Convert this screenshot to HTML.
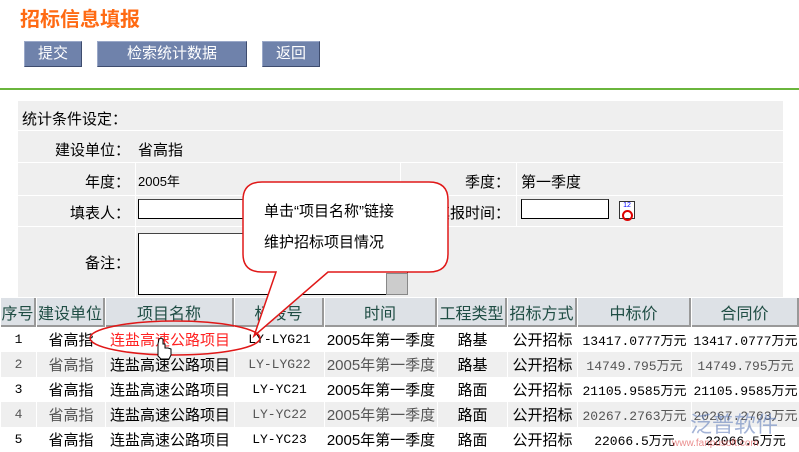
<!DOCTYPE html>
<html><head><meta charset="utf-8"><style>
body{margin:0;width:799px;height:449px;overflow:hidden;background:#fff;font-family:"Liberation Sans","Noto Sans CJK SC",sans-serif;position:relative;font-size:14px;color:#000}
.a{position:absolute}
.title{left:20px;top:3px;font-size:20px;font-weight:bold;color:#ff6a13}
.btn{top:41px;height:24px;background:#6f82ab;border:1px solid #9aa8c8;border-right-color:#3e4c6e;border-bottom-color:#3e4c6e;color:#fff;font-size:15px;text-align:center;line-height:24px}
.green{left:0;top:88px;width:799px;height:2px;background:#6ab53c}
.panel{left:18px;top:101px;width:765px;height:196px;background:#efefef}
.r{position:absolute;left:0;width:765px;border-top:1px solid #fff}
.lbl{position:absolute;text-align:right;font-size:15px}
input.f{position:absolute;height:20px;border:1px solid #000;border-top-color:#444;background:#fff;box-sizing:border-box}
table{position:absolute;left:0;top:298px;border-collapse:separate;border-spacing:1px 0;width:800px;font-size:15px}
th{background:#dde1e6;color:#1f4d44;font-weight:normal;height:27px;border-right:2px solid #999;border-bottom:2px solid #999;padding:0;font-size:16px}
td{height:25px;text-align:center;padding:0;white-space:nowrap}
tr.g td{background:#efefef;color:#555}
.mono{font-family:"Liberation Mono","Noto Sans CJK SC",monospace;font-size:13px}
</style></head><body>
<div class="a title">招标信息填报</div>
<div class="a btn" style="left:24px;width:56px">提交</div>
<div class="a btn" style="left:97px;width:148px">检索统计数据</div>
<div class="a btn" style="left:262px;width:56px">返回</div>
<div class="a green"></div>
<div class="a panel">
 <div class="lbl" style="left:4px;top:7px;text-align:left">统计条件设定：</div>
 <div class="r" style="top:29px;height:32px"></div>
 <div class="lbl" style="left:0;width:112px;top:38px">建设单位：</div>
 <div class="lbl" style="left:120px;top:38px;text-align:left">省高指</div>
 <div class="r" style="top:61px;height:33px"></div>
 <div style="position:absolute;left:117px;top:62px;width:1px;height:134px;background:#fff"></div>
 <div class="lbl" style="left:0;width:112px;top:70px">年度：</div>
 <div class="lbl" style="left:120px;top:70px;text-align:left;font-size:13px">2005年</div>
 <div style="position:absolute;left:382px;top:62px;width:1px;height:64px;background:#fff"></div>
 <div style="position:absolute;left:498px;top:62px;width:1px;height:64px;background:#fff"></div>
 <div class="lbl" style="left:400px;width:92px;top:70px">季度：</div>
 <div class="lbl" style="left:503px;top:70px;text-align:left">第一季度</div>
 <div class="r" style="top:94px"></div>
 <div class="lbl" style="left:0;width:112px;top:101px">填表人：</div>
 <input class="f" style="left:120px;top:98px;width:120px">
 <div class="lbl" style="left:380px;width:112px;top:101px">填报时间：</div>
 <input class="f" style="left:503px;top:98px;width:88px">
 <div style="position:absolute;left:601px;top:100px;width:14px;height:16px;border:1px solid #333;background:#fff;font-size:7px;color:#00f;line-height:8px;text-align:center">12<div style="width:7px;height:7px;border:2px solid #d00;border-radius:50%;margin:0 auto"></div></div>
 <div class="r" style="top:125px"></div>
 <div class="lbl" style="left:0;width:112px;top:151px">备注：</div>
 <input class="f" style="left:120px;top:132px;width:270px;height:62px">
 <div style="position:absolute;left:368px;top:172px;width:20px;height:20px;background:#ccc;border:1px solid #888"></div>
</div>
<table>
<tr><th style="width:33px">序号</th><th style="width:66px">建设单位</th><th style="width:126px">项目名称</th><th style="width:87px">标段号</th><th style="width:110px">时间</th><th style="width:67px">工程类型</th><th style="width:67px">招标方式</th><th style="width:111px">中标价</th><th>合同价</th></tr>
<tr><td class="mono">1</td><td>省高指</td><td style="color:#f22">连盐高速公路项目</td><td class="mono">LY-LYG21</td><td>2005年第一季度</td><td>路基</td><td>公开招标</td><td class="mono">13417.0777万元</td><td class="mono">13417.0777万元</td></tr>
<tr class="g"><td class="mono">2</td><td>省高指</td><td style="color:#000">连盐高速公路项目</td><td class="mono">LY-LYG22</td><td>2005年第一季度</td><td style="color:#000">路基</td><td style="color:#000">公开招标</td><td class="mono">14749.795万元</td><td class="mono">14749.795万元</td></tr>
<tr><td class="mono">3</td><td>省高指</td><td>连盐高速公路项目</td><td class="mono">LY-YC21</td><td>2005年第一季度</td><td>路面</td><td>公开招标</td><td class="mono">21105.9585万元</td><td class="mono">21105.9585万元</td></tr>
<tr class="g"><td class="mono">4</td><td>省高指</td><td style="color:#000">连盐高速公路项目</td><td class="mono">LY-YC22</td><td>2005年第一季度</td><td style="color:#000">路面</td><td style="color:#000">公开招标</td><td class="mono">20267.2763万元</td><td class="mono">20267.2763万元</td></tr>
<tr><td class="mono">5</td><td>省高指</td><td>连盐高速公路项目</td><td class="mono">LY-YC23</td><td>2005年第一季度</td><td>路面</td><td>公开招标</td><td class="mono">22066.5万元</td><td class="mono">22066.5万元</td></tr>
</table>
<svg class="a" style="left:0;top:0" width="799" height="449">
<path d="M262,182 H429 Q448,182 448,200 V254 Q448,272 429,272 H328 L254,336 L276,272 H262 Q243,272 243,254 V200 Q243,182 262,182 Z" fill="#fff" stroke="#e01818" stroke-width="1.5"/>
<ellipse cx="175" cy="338" rx="85" ry="17" fill="none" stroke="#e01818" stroke-width="1.5"/>
<text x="264" y="216" font-size="15" font-family="Liberation Sans,Noto Sans CJK SC,sans-serif">单击“项目名称”链接</text>
<text x="264" y="247" font-size="15" font-family="Liberation Sans,Noto Sans CJK SC,sans-serif">维护招标项目情况</text>
<path d="M158,344 v12 l3,3 h8 l2,-4 v-6 l-3,-1 l-3,0 v-4 h-2 v-5 l-2,-1 l-2,1z" fill="#fff" stroke="#000" stroke-width="1"/>
<text x="690" y="432" font-size="22" fill="#5a78b8" opacity="0.55" font-family="Noto Sans CJK SC,sans-serif">泛普软件</text>
<text x="672" y="446" font-size="10" fill="#d44" opacity="0.6" font-family="Liberation Sans,sans-serif">www.fanpusoft.com</text>
</svg>
</body></html>
